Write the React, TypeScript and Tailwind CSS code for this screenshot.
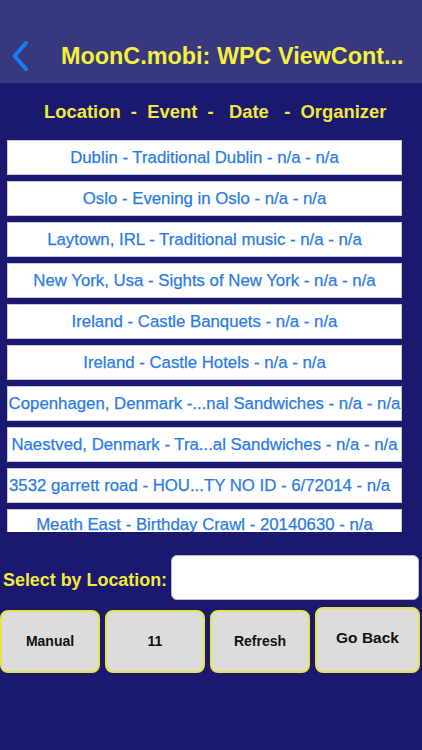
import React from "react";

const rows = [
  "Dublin - Traditional Dublin - n/a - n/a",
  "Oslo - Evening in Oslo - n/a - n/a",
  "Laytown, IRL - Traditional music - n/a - n/a",
  "New York, Usa - Sights of New York - n/a - n/a",
  "Ireland - Castle Banquets - n/a - n/a",
  "Ireland - Castle Hotels - n/a - n/a",
  "Copenhagen, Denmark -...nal Sandwiches - n/a - n/a",
  "Naestved, Denmark - Tra...al Sandwiches - n/a - n/a",
  "3532 garrett road - HOU...TY NO ID - 6/72014 - n/a",
  "Meath East - Birthday Crawl - 20140630 - n/a",
];

export default function App() {
  return (
    <div
      className="w-[422px] h-[750px] bg-[#1b1870] flex flex-col overflow-hidden"
      style={{ fontFamily: '"Liberation Sans", Arial, sans-serif' }}
    >
      <div className="h-[84px] bg-[#38387f] border-b border-[#23226a] flex items-end pb-[11px] shrink-0">
        <svg width="44" height="32" viewBox="0 0 44 32" className="ml-[4px] shrink-0">
          <path d="M22 3 L10.5 16 L22 29" fill="none" stroke="#1a7cf7" strokeWidth="4" strokeLinecap="round" strokeLinejoin="round" />
        </svg>
        <div className="ml-[13px] text-[23.4px] font-bold text-[#f5f03a] leading-[32px] whitespace-nowrap">
          MoonC.mobi: WPC ViewCont...
        </div>
      </div>
      <div className="h-[56px] flex items-center pl-[44px] text-[18.4px] font-bold text-[#f0ea3a] whitespace-pre">
        {"Location  -  Event  -   Date   -  Organizer"}
      </div>
      <div className="ml-[7px] w-[395px] h-[392px] overflow-hidden flex flex-col gap-[6px]">
        {rows.map((r, i) => (
          <div
            key={i}
            className={`h-[35px] shrink-0 bg-white border border-[#c9c9dc] flex items-center text-[16.8px] text-[#2a7be4] whitespace-nowrap [-webkit-text-stroke:0.25px_#2a7be4] ${
              i === 8 ? "justify-start pl-[1px]" : "justify-center"
            } ${i === 9 ? "pb-[3px]" : ""}`}
          >
            {r}
          </div>
        ))}
      </div>
      <div className="mt-[23px] flex items-center">
        <div className="ml-[3px] mt-[6px] w-[168px] text-[17.9px] font-bold text-[#f0ea3a] whitespace-nowrap">
          Select by Location:
        </div>
        <div className="w-[248px] h-[45px] bg-white rounded-[6px] border border-[#b8b8d0]" />
      </div>
      <div className="mt-[7px] flex items-start gap-[5px] px-0">
        <div className="mt-[3px] w-[100px] h-[63px] bg-[#dcdcdc] border-2 border-[#e9e34a] rounded-[8px] flex items-center justify-center text-[14px] font-bold text-[#111]">
          Manual
        </div>
        <div className="mt-[3px] w-[100px] h-[63px] bg-[#dcdcdc] border-2 border-[#e9e34a] rounded-[8px] flex items-center justify-center text-[14px] font-bold text-[#111]">
          11
        </div>
        <div className="mt-[3px] w-[100px] h-[63px] bg-[#dcdcdc] border-2 border-[#e9e34a] rounded-[8px] flex items-center justify-center text-[14px] font-bold text-[#111]">
          Refresh
        </div>
        <div className="w-[105px] h-[66px] bg-[#dcdcdc] border-2 border-[#e9e34a] rounded-[8px] flex items-center justify-center pb-[4px] text-[15.5px] font-bold text-[#111]">
          Go Back
        </div>
      </div>
    </div>
  );
}
